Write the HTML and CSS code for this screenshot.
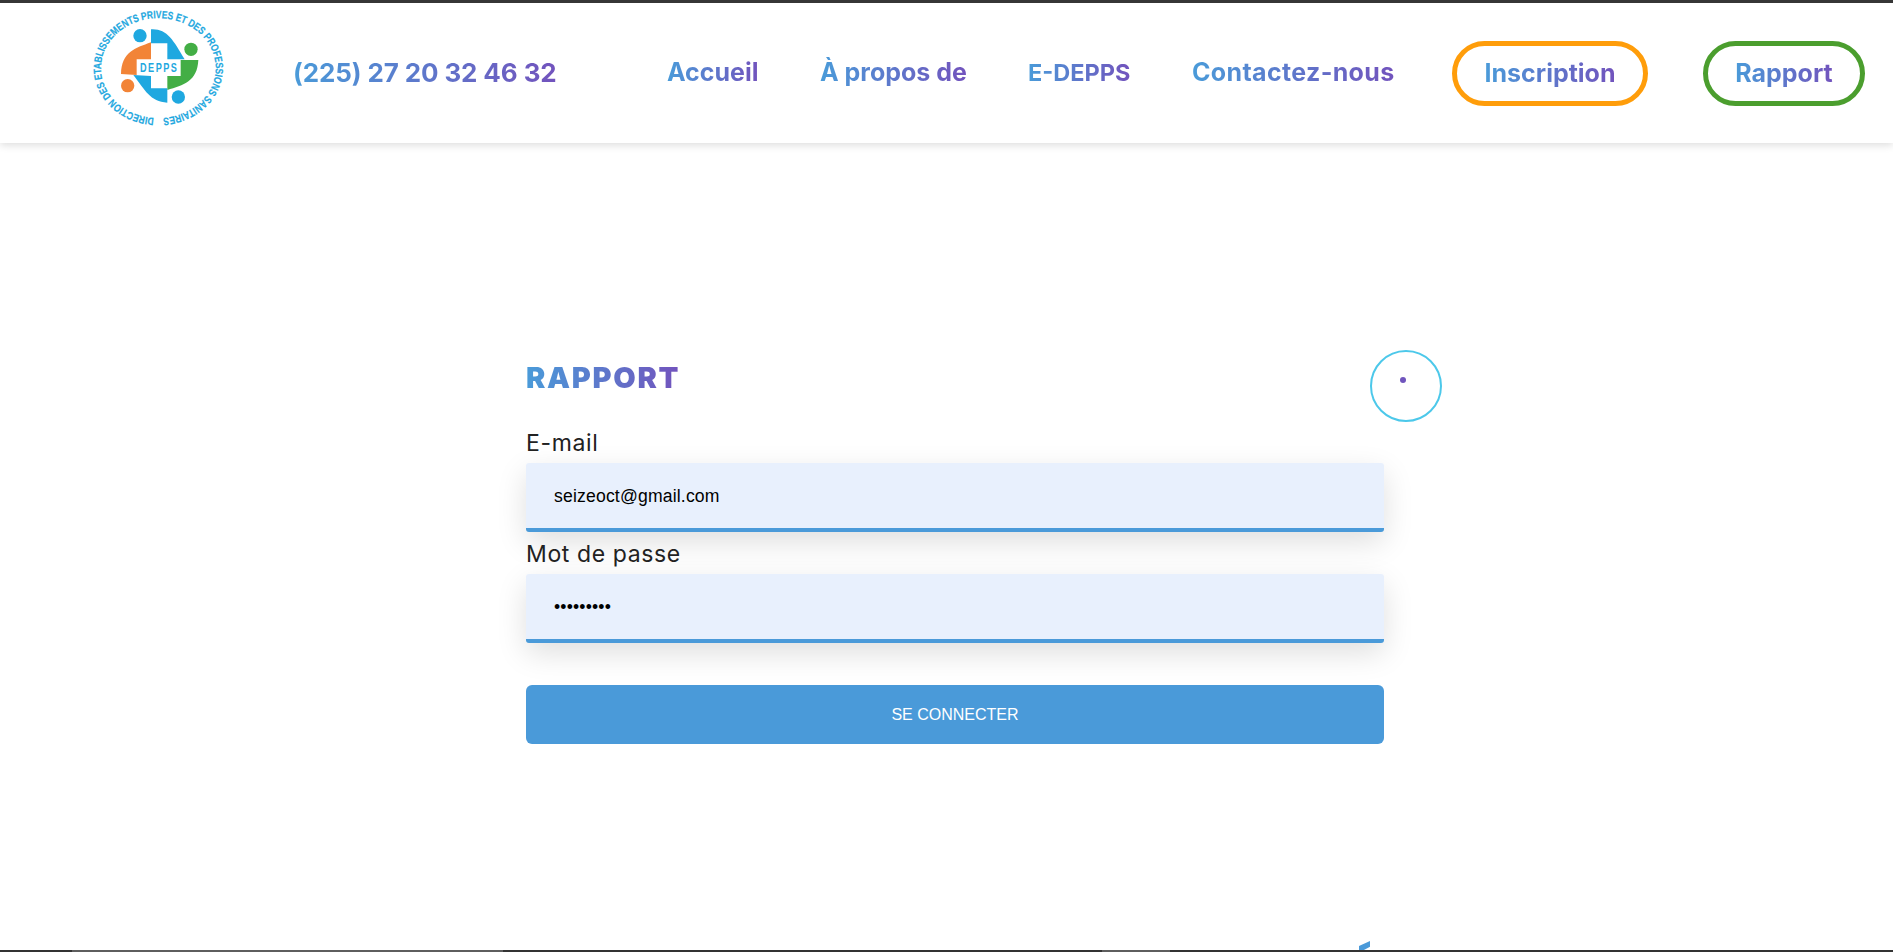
FILE: index.html
```html
<!DOCTYPE html>
<html lang="fr">
<head>
<meta charset="utf-8">
<title>Rapport - DEPPS</title>
<link rel="stylesheet" href="styles.css">
</head>
<body>
<div class="page">
  <header class="topbar">
    <a class="logo" href="#" aria-label="DEPPS">
      <svg class="logo-svg" viewBox="0 0 600 450" width="200" height="150">
        <defs><path id="ring" d="M282 354A172 150 0 1 1 308 354"/></defs>
        <text class="logo-ring"><textPath href="#ring" textLength="985" lengthAdjust="spacingAndGlyphs">DIRECTION DES ETABLISSEMENTS PRIVES ET DES PROFESSIONS SANITAIRES</textPath></text>
        <circle class="lb" cx="240" cy="107" r="20"/>
        <circle class="lg" cx="393" cy="148" r="20"/>
        <circle class="lo" cx="203" cy="257" r="20"/>
        <circle class="lb" cx="355" cy="291" r="20"/>
        <path class="lb" d="M273 88C320 85 340 120 374 178L322 178L322 130L273 130Z"/>
        <path class="lo" d="M273 127C225 145 185 155 183 222L230 225L230 178L273 178Z"/>
        <path class="lg" d="M415 180L362 180L362 228L322 228L322 270C370 255 412 245 415 180Z"/>
        <path class="lb" d="M322 308C270 305 255 270 220 225L273 228L273 265L322 265Z"/>
        <text class="logo-name" x="240" y="217" textLength="115" lengthAdjust="spacingAndGlyphs">DEPPS</text>
      </svg>
    </a>
    <a class="phone grad" href="#">(225) 27 20 32 46 32</a>
    <nav class="nav">
      <a class="nav-link grad" href="#">Accueil</a>
      <a class="nav-link grad" href="#">À propos de</a>
      <a class="nav-link nav-link-caps grad" href="#">E-DEPPS</a>
      <a class="nav-link nav-link-long grad" href="#">Contactez-nous</a>
      <a class="pill pill-orange" href="#"><span class="grad">Inscription</span></a>
      <a class="pill pill-green" href="#"><span class="grad">Rapport</span></a>
    </nav>
  </header>
  <main class="content">
    <form class="form">
      <h1 class="title grad">RAPPORT</h1>
      <label class="label" for="email">E-mail</label>
      <input class="field" id="email" type="email" value="seizeoct@gmail.com">
      <label class="label label-second" for="pass">Mot de passe</label>
      <input class="field" id="pass" type="password" value="123456789">
      <button class="submit" type="button">Se connecter</button>
    </form>
  </main>
  <div class="cursor"><span class="cursor-dot"></span></div>
  <span class="clipped"></span>
  <div class="edge-bottom">
    <span class="edge edge-a"></span>
    <span class="edge edge-b"></span>
    <span class="edge edge-c"></span>
    <span class="edge edge-d"></span>
    <span class="edge edge-e"></span>
  </div>
</div>
</body>
</html>
```
FILE: styles.css
```css
* { box-sizing: border-box; }
html, body { margin: 0; height: 100%; background: #fff; overflow: hidden; }
a { text-decoration: none; }
.page { position: relative; height: 952px; display: flex; flex-direction: column; font-family: Inter, "Liberation Sans", sans-serif; }
.grad { display: inline-block; background: linear-gradient(90deg, #4a9bd9, #7253bd); -webkit-background-clip: text; background-clip: text; color: transparent; }

.topbar { height: 143px; flex: none; display: flex; align-items: center; background: #fff; border-top: 3px solid #363636; box-shadow: 0 2px 8px rgba(0,0,0,.14); padding-left: 60px; position: relative; }
.logo { width: 200px; height: 150px; flex: none; margin-top: -3px; align-self: flex-start; }
.logo-svg { display: block; }
.logo-ring { font-family: "Liberation Sans", sans-serif; font-weight: 700; font-size: 32px; fill: #1fa8e0; stroke: #1fa8e0; stroke-width: .6px; }
.logo-name { font-family: "Liberation Sans", sans-serif; font-weight: 700; font-size: 37px; letter-spacing: 6px; fill: #1fa8e0; }
.lb { fill: #1fa8e0; }
.lg { fill: #43ae45; }
.lo { fill: #f28437; }

.phone { margin-left: 33px; margin-bottom: 2px; font-size: 26px; font-weight: 700; letter-spacing: -.12px; white-space: nowrap; width: 264px; }
.nav { margin-left: 110px; display: grid; grid-template-columns: 92px 147px 103px 203px 196px 162px; column-gap: 61px; align-items: center; }
.nav-link { font-size: 25px; font-weight: 700; white-space: nowrap; justify-self: start; margin-bottom: 2px; }
.nav-link-caps { font-size: 23.5px; }
.nav-link-long { letter-spacing: .35px; }
.pill { height: 65px; border-radius: 33px; border: 5px solid; display: flex; align-items: center; justify-content: center; font-size: 25px; font-weight: 700; }
.pill-orange { width: 196px; border-color: #ff9d0a; margin-left: -4px; }
.pill-green { width: 162px; border-color: #4b9e2e; margin-left: -10px; }

.content { flex: 1; display: flex; flex-direction: column; align-items: flex-start; padding: 220px 0 0 526px; }
.form { width: 858px; display: flex; flex-direction: column; align-items: flex-start; }
.title { margin: 0; font-size: 29px; line-height: 29px; font-weight: 900; letter-spacing: 1.7px; }
.label { font-size: 23px; line-height: 30px; color: #222; letter-spacing: .62px; margin-top: 36px; margin-bottom: 5px; }
.label-second { margin-top: 7px; }
.field { width: 100%; height: 69px; border: 0; border-bottom: 4px solid #4a9ad9; border-radius: 3px; background: #e8f0fd; padding: 2px 28px 0; font-family: "Liberation Sans", Arial, sans-serif; font-size: 17.6px; letter-spacing: .17px; color: #000; box-shadow: 0 10px 30px rgba(0,0,0,.13); outline: none; }
.submit { width: 100%; height: 59px; margin-top: 42px; border: 0; border-radius: 6px; background: #4a9ad9; color: #fff; font-family: "Liberation Sans", Arial, sans-serif; font-size: 16px; text-transform: uppercase; }

.cursor { position: absolute; left: 1370px; top: 350px; width: 72px; height: 72px; border: 2px solid #4cc8ea; border-radius: 50%; }
.cursor-dot { position: absolute; left: 28px; top: 25px; width: 6px; height: 6px; border-radius: 50%; background: #7055bd; }
.clipped { position: absolute; left: 1359px; top: 941px; width: 11px; height: 9px; background: #4a9ad9; clip-path: polygon(100% 0, 100% 65%, 45% 100%, 0 100%, 0 55%); }
.edge-bottom { height: 2px; flex: none; display: flex; }
.edge { display: block; height: 2px; }
.edge-a { width: 72px; background: #333; }
.edge-b { width: 431px; background: #5e5e5e; }
.edge-c { width: 599px; background: #333; }
.edge-d { width: 68px; background: #5e5e5e; }
.edge-e { flex: 1; background: #333; }
```
